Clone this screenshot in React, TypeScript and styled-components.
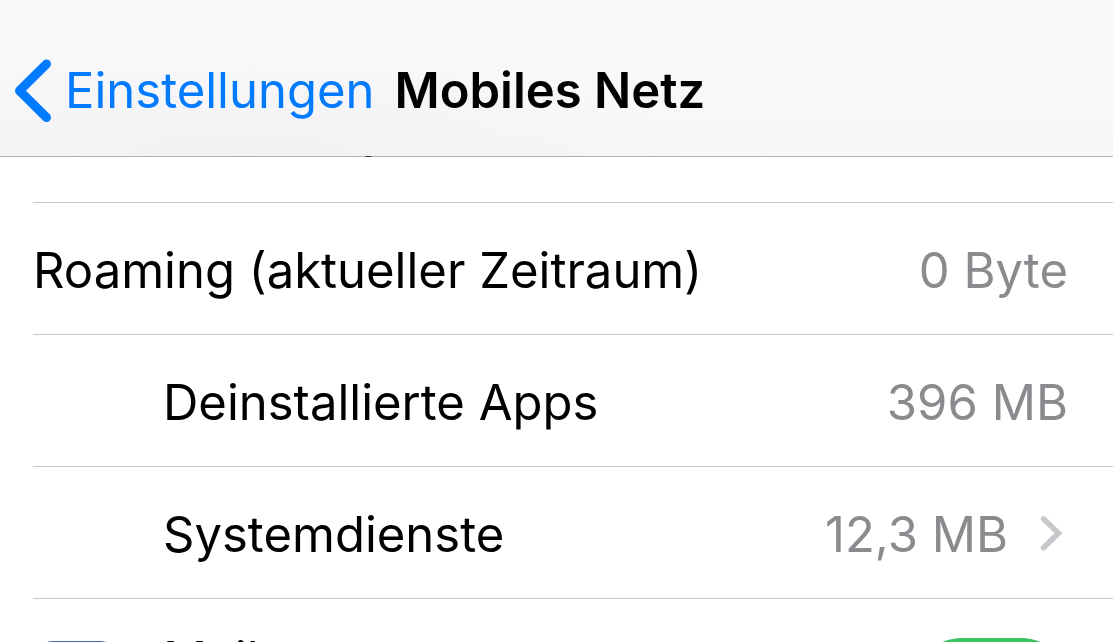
import React from "react";
import styled, { createGlobalStyle } from "styled-components";

const GlobalStyle = createGlobalStyle`
  *, *::before, *::after { box-sizing: border-box; }
  body {
    margin: 0;
    background: #fff;
    color: #000;
    font-family: Inter, "Liberation Sans", sans-serif;
    font-size: 49px;
    line-height: 60px;
  }
`;

const Screen = styled.div`
  height: 100vh;
  overflow: hidden;
`;

const NavBar = styled.header`
  position: relative;
  z-index: 1;
  display: flex;
  align-items: center;
  gap: 20px;
  height: 157px;
  padding: 26px 14px 0;
  border-bottom: 1px solid rgba(0, 0, 0, 0.3);
  background:
    radial-gradient(ellipse 480px 110px at 240px 100%, rgba(0, 0, 0, 0.025), transparent),
    linear-gradient(#fafafc, #f7f7f9);
  background-clip: padding-box;
  white-space: nowrap;
`;

const BackLink = styled.a`
  display: flex;
  align-items: center;
  gap: 13px;
  color: #007aff;
  text-decoration: none;
`;

const Title = styled.h1`
  margin: 0;
  font-size: inherit;
  font-weight: 600;
`;

/* The list is scrolled, so its first row lies partly under the bar. */
const List = styled.ul`
  margin: -87px 0 0;
  padding: 0 0 0 33px;
  list-style: none;
`;

const Row = styled.li<{ $indent?: boolean; $tall?: boolean }>`
  display: flex;
  align-items: center;
  justify-content: space-between;
  min-height: ${(p) => (p.$tall ? 172 : 132)}px;
  padding: ${(p) => (p.$tall ? 0 : 5)}px 45px 0 ${(p) => (p.$indent ? 130 : 0)}px;
  border-top: 1px solid #c8c7cc;
  white-space: nowrap;
`;

const Value = styled.span`
  color: #8a8a8f;
`;

const Detail = styled.a`
  display: flex;
  flex: 1;
  align-items: center;
  color: inherit;
  text-decoration: none;
  margin-right: 4px;
  gap: 32px;
`;

const Label = styled.span`
  flex: 1;
`;

const AppLabel = styled.label`
  flex: 1;
  padding: 0 0 49px 43px;
`;

const Switch = styled.input`
  appearance: none;
  display: flex;
  justify-content: flex-start;
  width: 153px;
  height: 93px;
  margin: 0;
  padding: 6px;
  border-radius: 47px;
  background: #d9d9de;
  &::before {
    content: "";
    width: 81px;
    height: 81px;
    border-radius: 50%;
    background: #fff;
  }
  &:checked {
    justify-content: flex-end;
    background: #3cc35f;
  }
`;

const BackChevron = () => (
  <svg width="38" height="64" viewBox="0 0 38 64" fill="none" aria-hidden="true">
    <path d="M32.500 5 L5.500 31.800 L32.500 58.500" stroke="currentColor" strokeWidth="9" strokeLinecap="round" strokeLinejoin="round" />
  </svg>
);

const Disclosure = () => (
  <svg width="24" height="38" viewBox="0 0 24 38" fill="none" aria-hidden="true">
    <path d="M3.500 2.800 L18.500 17.300 L3.500 31.800" stroke="#c7c7cc" strokeWidth="5.500" strokeLinecap="round" strokeLinejoin="miter" />
  </svg>
);

const MailIcon = () => (
  <svg width="87" height="87" viewBox="0 0 87 87" aria-hidden="true">
    <rect width="87" height="87" rx="20" fill="#3a68a8" />
    <rect x="13" y="23" width="61" height="41" rx="6" fill="#fff" />
    <path d="M15 26 L43.500 48 L72 26" fill="none" stroke="#3a68a8" strokeWidth="3" />
  </svg>
);

export default function App() {
  return (
    <Screen>
      <GlobalStyle />
      <NavBar>
        <BackLink href="#einstellungen">
          <BackChevron />
          Einstellungen
        </BackLink>
        <Title>Mobiles Netz</Title>
      </NavBar>
      <List>
        <Row>
          <span>Aktueller Zeitraum</span>
          <Value>246 MB</Value>
        </Row>
        <Row>
          <span>Roaming (aktueller Zeitraum)</span>
          <Value>0 Byte</Value>
        </Row>
        <Row $indent>
          <span>Deinstallierte Apps</span>
          <Value>396 MB</Value>
        </Row>
        <Row $indent>
          <Detail href="#systemdienste">
            <Label>Systemdienste</Label>
            <Value>12,3 MB</Value>
            <Disclosure />
          </Detail>
        </Row>
        <Row $tall>
          <MailIcon />
          <AppLabel htmlFor="mail">Mail</AppLabel>
          <Switch id="mail" type="checkbox" defaultChecked />
        </Row>
      </List>
    </Screen>
  );
}
